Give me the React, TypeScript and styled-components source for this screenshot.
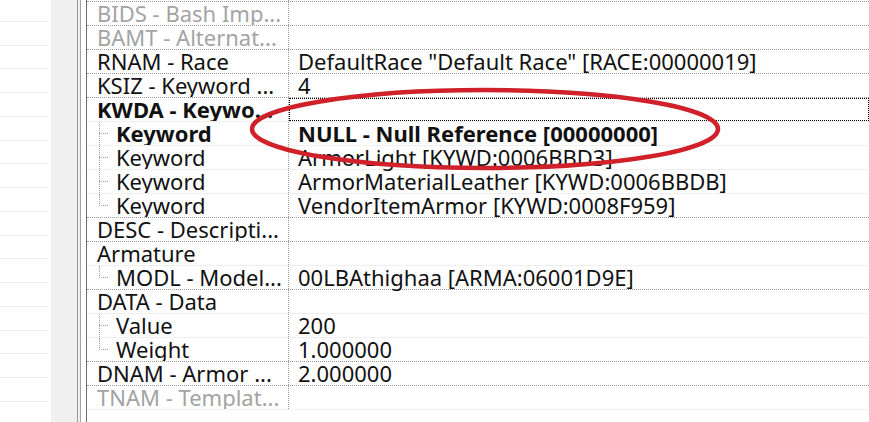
import styled, { createGlobalStyle } from 'styled-components';

const GlobalStyle = createGlobalStyle`
    html, body {
        margin: 0;
        padding: 0;
        background: #ffffff;
        overflow: hidden;
    }
`

type RecordNode = {
    label: string;
    value?: string;
    dim?: boolean;
    bold?: boolean;
    focused?: boolean;
    children?: RecordNode[];
}

const records: RecordNode[] = [
    { label: 'ZNAM - Sound - Pu...', dim: true },
    { label: 'BIDS - Bash Imp...', dim: true },
    { label: 'BAMT - Alternat...', dim: true },
    { label: 'RNAM - Race', value: 'DefaultRace "Default Race" [RACE:00000019]' },
    { label: 'KSIZ - Keyword ...', value: '4' },
    {
        label: 'KWDA - Keywo...', bold: true, focused: true,
        children: [
            { label: 'Keyword', value: 'NULL - Null Reference [00000000]', bold: true },
            { label: 'Keyword', value: 'ArmorLight [KYWD:0006BBD3]' },
            { label: 'Keyword', value: 'ArmorMaterialLeather [KYWD:0006BBDB]' },
            { label: 'Keyword', value: 'VendorItemArmor [KYWD:0008F959]' },
        ],
    },
    { label: 'DESC - Descripti...' },
    {
        label: 'Armature',
        children: [
            { label: 'MODL - Model...', value: '00LBAthighaa [ARMA:06001D9E]' },
        ],
    },
    {
        label: 'DATA - Data',
        children: [
            { label: 'Value', value: '200' },
            { label: 'Weight', value: '1.000000' },
        ],
    },
    { label: 'DNAM - Armor ...', value: '2.000000' },
    { label: 'TNAM - Templat...', dim: true, },
]

const Window = styled.div`
    display: flex;
    height: 422px;
    width: 869px;
    overflow: hidden;
    font-family: "Noto Sans", "Open Sans", sans-serif;
    background: #ffffff;
`

const FileList = styled.div`
    width: 51px;
    flex-shrink: 0;
    background: #ffffff;
    display: flex;
    flex-direction: column;
    margin-top: -2px;
`

const FileRow = styled.div`
    height: 23.75px;
    width: 48px;
    box-sizing: border-box;
    border-bottom: 1px solid #ebebeb;
    flex-shrink: 0;
`

const Splitter = styled.div`
    width: 26px;
    flex-shrink: 0;
    background: #f0f0f0;
    border-right: 1px solid #9a9a9a;
`

const OuterFrame = styled.div`
    flex: 1;
    display: flex;
    border-left: 2px solid #f0f0f0;
    min-width: 0;
`

const InnerFrame = styled.div`
    flex: 1;
    display: flex;
    border-left: 1px solid #a3a3a3;
    padding-left: 5px;
    background: #ffffff;
    min-width: 0;
`

const TreeView = styled.div`
    position: relative;
    flex: 1;
    border-left: 1px solid #6d6d6d;
    overflow: hidden;
    min-width: 0;
`

const TreeBody = styled.div`
    display: flex;
    flex-direction: column;
    margin-top: -22px;
`

const Row = styled.div<{ $groupEnd: boolean }>`
    display: grid;
    grid-template-columns: 202px 1fr;
    height: 24px;
    box-sizing: border-box;
    border-bottom: 1px ${p => p.$groupEnd ? 'dotted #9c9c9c' : 'solid #efefef'};
    font-size: 22px;
    line-height: 23px;
    color: #111111;
    flex-shrink: 0;
`

const LabelCell = styled.div<{ $dim?: boolean; $bold?: boolean; $child?: boolean }>`
    display: flex;
    align-items: stretch;
    box-sizing: border-box;
    border-right: 1px dotted #9c9c9c;
    padding-left: ${p => p.$child ? '12px' : '10px'};
    color: ${p => p.$dim ? '#a3a3a3' : '#111111'};
    font-weight: ${p => p.$bold ? 700 : 400};
    white-space: nowrap;
    overflow: hidden;
`

const Guide = styled.span<{ $last: boolean }>`
    position: relative;
    width: 17px;
    flex-shrink: 0;

    &::before {
        content: "";
        position: absolute;
        left: 0;
        top: 0;
        height: ${p => p.$last ? '12px' : '25px'};
        border-left: 1px dotted #a0a0a0;
    }

    &::after {
        content: "";
        position: absolute;
        left: 0;
        top: 11px;
        width: 9px;
        border-top: 1px dotted #a0a0a0;
    }
`

const ValueCell = styled.div<{ $bold?: boolean; $focused?: boolean }>`
    box-sizing: border-box;
    padding-left: ${p => p.$focused ? '8px' : '9px'};
    font-weight: ${p => p.$bold ? 700 : 400};
    white-space: nowrap;
    border: ${p => p.$focused ? '1px dotted #000000' : 'none'};
    line-height: ${p => p.$focused ? '21px' : '23px'};
`

// hand-drawn marker round the selected keyword
const Marker = styled.svg`
    position: absolute;
    left: -87px;
    top: 0;
    width: 869px;
    height: 422px;
    pointer-events: none;
`

function TreeRow({ node, child, last, groupEnd }: { node: RecordNode; child?: boolean; last?: boolean; groupEnd: boolean }) {
    return (
        <Row $groupEnd={groupEnd}>
            <LabelCell $dim={node.dim} $bold={node.bold} $child={child}>
                {child && <Guide $last={!!last} />}
                {node.label}
            </LabelCell>
            <ValueCell $bold={node.bold} $focused={node.focused}>{node.value}</ValueCell>
        </Row>
    )
}

function App() {
    const fileRows = Array.from({ length: 18 }, (_, i) => i);

    return (
        <>
            <GlobalStyle />
            <Window>
                <FileList>
                    {fileRows.map(i => <FileRow key={i} />)}
                </FileList>
                <Splitter />
                <OuterFrame>
                    <InnerFrame>
                        <TreeView>
                            <TreeBody>
                                {records.map((rec, i) => {
                                    const kids = rec.children ?? [];
                                    const isLast = i === records.length - 1;
                                    return (
                                        <div key={i} style={{ display: 'contents' }}>
                                            <TreeRow node={rec} groupEnd={kids.length === 0 && !isLast} />
                                            {kids.map((kid, j) => (
                                                <TreeRow
                                                    key={j}
                                                    node={kid}
                                                    child
                                                    last={j === kids.length - 1}
                                                    groupEnd={j === kids.length - 1}
                                                />
                                            ))}
                                        </div>
                                    )
                                })}
                            </TreeBody>
                            <Marker viewBox="0 0 869 422">
                                <ellipse cx="485" cy="129" rx="233" ry="39" fill="none" stroke="#d0212b" strokeWidth="4.5" />
                            </Marker>
                        </TreeView>
                    </InnerFrame>
                </OuterFrame>
            </Window>
        </>
    )
}

export default App
